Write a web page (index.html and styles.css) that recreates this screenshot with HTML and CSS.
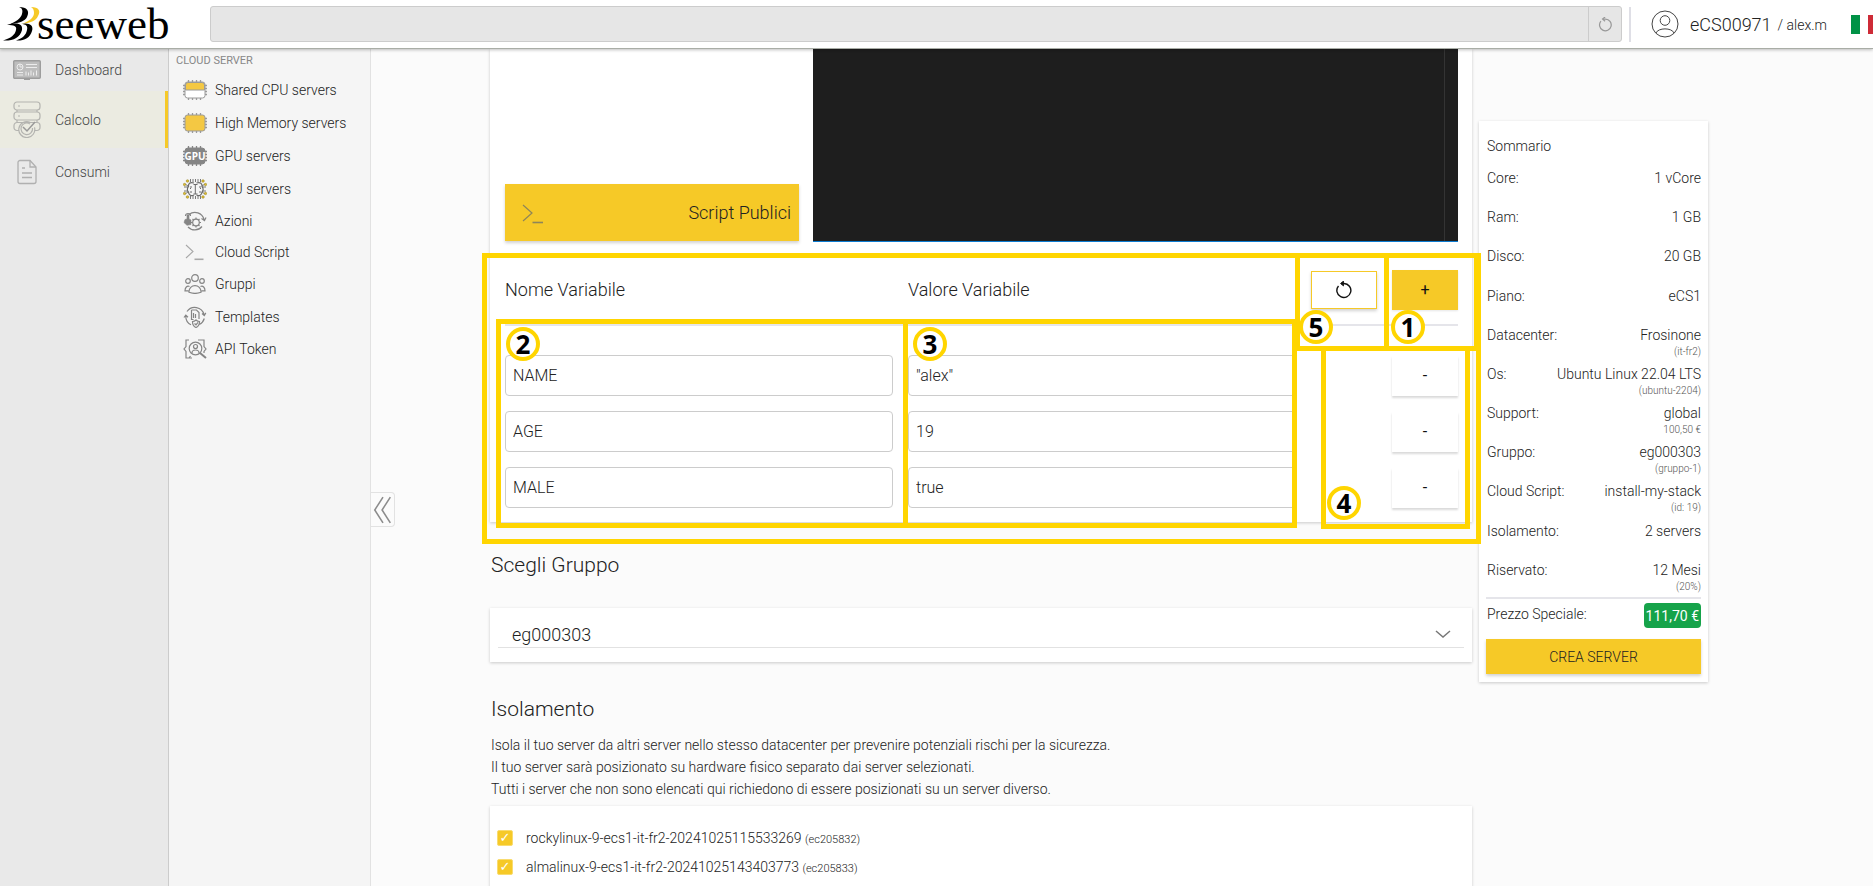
FILE: index.html
```html
<!DOCTYPE html>
<html lang="it">
<head>
<meta charset="utf-8">
<meta name="viewport" content="width=device-width, initial-scale=1">
<title>Seeweb - Cloud Server</title>
<link rel="stylesheet" href="styles.css">
</head>
<body>
<div class="app">
  <header class="topbar">
    <a class="logo" href="#" aria-label="seeweb">
      <svg class="logo-mark" viewBox="0 0 38 34" width="38" height="34" aria-hidden="true">
        <path d="M16 0 C24 0 27 4 24 10 C22 14 16 16 9 17 L5 18 C13 15 18 11 19 7 C20 3 19 1 16 0Z" fill="#000"/>
        <path d="M28 0 C36 0 38 4 35 9 C33 14 27 16 19 17 C27 14 31 10 31 6 C31 3 30 1 28 0Z" fill="#f6c927"/>
        <path d="M4 18 C15 15 20 17 19 23 C17 31 10 34 0 33.500 C8 31 12 28 13 23 C14 19 11 18 4 18Z" fill="#000"/>
        <path d="M18 17 C26 15 31 18 29 24 C27 31 21 34 13 33.500 C20 31 23 28 24 23 C25 19 23 17 18 17Z" fill="#000"/>
      </svg>
      <span class="logo-text">seeweb</span>
    </a>
    <form class="search">
      <input class="search-input" type="search" aria-label="Cerca">
      <button class="search-reset" type="button" aria-label="Ricarica">
        <svg viewBox="0 0 18 18" width="15" height="15" fill="none" stroke="currentColor" stroke-width="1.500"><path d="M3.500 5 A7 7 0 1 0 9 2.500 H6"/><path d="M8.500 0 L5.500 2.500 L8.500 5"/></svg>
      </button>
    </form>
    <div class="account">
      <svg class="avatar" viewBox="0 0 28 28" width="28" height="28" fill="none" stroke="#444" stroke-width="1"><circle cx="14" cy="14" r="13"/><circle cx="14" cy="10.500" r="4.800"/><path d="M5 23 C7 17.500 21 17.500 23 23"/></svg>
      <span class="account-id">eCS00971</span><span class="account-name">/ alex.m</span>
      <span class="flag" role="img" aria-label="Italiano"></span>
    </div>
  </header>

  <nav class="rail" aria-label="Sezioni">
    <a class="rail-item rail-dashboard" href="#">
      <svg viewBox="0 0 28 20" width="28" height="20" fill="none" stroke="#9d9d9d"><rect x=".7" y=".7" width="26.600" height="17.600" rx="1" fill="#bdbdbd" stroke-width="1.400"/><path d="M11 19.300h6" stroke-width="1.500"/><g stroke="#ececec"><circle cx="7" cy="7" r="3"/><path d="M7 4v3h3M13 4.500h11M13 7.500h11M4 12.500h6M4 15h6M13 15.500v-4M15.500 15.500v-3M18 15.500v-5M20.500 15.500v-3M23.500 15.500v-5"/></g></svg>
      <span>Dashboard</span>
    </a>
    <a class="rail-item rail-calcolo active" href="#">
      <svg viewBox="0 0 28 37" width="28" height="37" fill="none" stroke="#b4b4b0" stroke-width="1.200"><rect x="1" y="1" width="26" height="8" rx="3"/><rect x="1" y="11" width="26" height="8" rx="3"/><path d="M6 29.500H4a3 3 0 0 1-3-3v-2a3 3 0 0 1 3-3h20a3 3 0 0 1 3 3v2a3 3 0 0 1-3 3h-2M4 9v2M24 9v2M4 19v2M24 19v2M5 5h2M5 15h2"/><path d="M17 21.200a8 8 0 1 0 4.500 5.200"/><path d="M17 23a5.800 5.800 0 1 0 2.500 4"/><path d="M10 26l4 4 8-9" stroke="#999" stroke-width="1.500"/></svg>
      <span>Calcolo</span>
    </a>
    <a class="rail-item rail-consumi" href="#">
      <svg viewBox="0 0 28 26" width="28" height="26" fill="none" stroke="#b0b0b0" stroke-width="1.300"><path d="M17 1.500H7a2 2 0 0 0-2 2v19a2 2 0 0 0 2 2h14a2 2 0 0 0 2-2V8z"/><path d="M17 1.500V8h6M9 9h3M9 14h10M9 18.500h10"/></svg>
      <span>Consumi</span>
    </a>
  </nav>

  <nav class="subnav" aria-label="Cloud server">
    <h2 class="subnav-title">CLOUD SERVER</h2>
    <a class="subnav-item" href="#">
      <svg viewBox="0 0 24 20" width="24" height="20" fill="none" stroke="#9a9a9a"><path d="M5.500 0v20M9.500 0v20M13.500 0v20M17.500 0v20M0 5.500h24M0 8.500h24M0 11.500h24M0 14.500h24" stroke-width="1.300"/><rect x="2" y="2" width="20" height="16" rx="2.500" fill="#fff"/><path d="M2.500 10V5a2.500 2.500 0 0 1 2.500-2.500h14A2.500 2.500 0 0 1 21.500 5v5z" fill="#f4c843"/></svg>
      <span>Shared CPU servers</span></a>
    <a class="subnav-item" href="#">
      <svg viewBox="0 0 24 20" width="24" height="20" fill="none" stroke="#9a9a9a"><path d="M5.500 0v20M9.500 0v20M13.500 0v20M17.500 0v20M0 5.500h24M0 8.500h24M0 11.500h24M0 14.500h24" stroke-width="1.300"/><rect x="2" y="2" width="20" height="16" rx="2.500" fill="#f4c843"/></svg>
      <span>High Memory servers</span></a>
    <a class="subnav-item" href="#">
      <svg viewBox="0 0 24 20" width="24" height="20" fill="none" stroke="#858585"><path d="M5.500 0v20M9.500 0v20M13.500 0v20M17.500 0v20M0 5.500h24M0 8.500h24M0 11.500h24M0 14.500h24" stroke-width="1.300"/><rect x="2" y="2" width="20" height="16" rx="3" fill="#858585"/><text x="12" y="13.500" class="chip-label">GPU</text></svg>
      <span>GPU servers</span></a>
    <a class="subnav-item" href="#">
      <svg viewBox="0 0 24 20" width="24" height="20" fill="none" stroke="#6b6b6b"><path d="M7.500 0v3M10 0v3M12.500 0v3M15 0v3M17.500 0v3M7.500 17v3M10 17v3M12.500 17v3M15 17v3M17.500 17v3M1 8h4M1 12h4M19 8h4M19 12h4M2 5l3 2M22 5l-3 2M2 15l3-2M22 15l-3-2" stroke-width=".9"/><path d="M11 4C7 2.500 5 5 5.500 7.500C4 9 4 12 5.500 13C5.500 16 8.500 17.500 11 16M13.500 4C17.500 2.500 19.500 5 19 7.500C20.500 9 20.500 12 19 13C19 16 16 17.500 13.500 16" stroke-width="1.200"/><path d="M10.500 5.500h4M12.300 5.500v9.500M10.500 15h4M8 7v2l-1 1M8 14v-2M17 7v2l1 1M17 14v-2"/><g fill="#e3c02a" stroke="#8c7c33" stroke-width=".5"><circle cx="4.500" cy="2" r="1.300"/><circle cx="20" cy="2" r="1.300"/><circle cx="1.500" cy="5.500" r="1.200"/><circle cx="22.500" cy="5.500" r="1.200"/><circle cx="1.500" cy="14.500" r="1.200"/><circle cx="22.500" cy="14.500" r="1.200"/><circle cx="4.500" cy="18" r="1.300"/><circle cx="20" cy="18" r="1.300"/></g></svg>
      <span>NPU servers</span></a>
    <a class="subnav-item row-short" href="#">
      <svg viewBox="0 0 24 20" width="24" height="20" fill="none" stroke="#858585" stroke-width="1.200"><path d="M6 3.500A9.300 9.300 0 0 1 21 8.500M18.500 7.500l3 2l1.500-3M19 15.500A9.300 9.300 0 0 1 5 16"/><circle cx="13" cy="11.500" r="3.300"/><path d="M13 6.500v1.700M13 14.800v1.700M8 11.500h1.700M16.300 11.500H18M9.500 8l1.200 1.200M15.300 13.800l1.200 1.200M9.500 15l1.200-1.200M15.300 9.200L16.500 8"/><path d="M2 8.500l2-.5V4.500a1 1 0 0 1 2 0V8l2 1v4.500l-4 .8-3-2.800z" fill="#858585" stroke-width=".6"/><path d="M2.500 5a2.500 2.500 0 0 1 5 0"/></svg>
      <span>Azioni</span></a>
    <a class="subnav-item row-short" href="#">
      <svg viewBox="0 0 24 20" width="24" height="20" fill="none" stroke="#a8a8a8"><path d="M3 3l7 6.500L3 16" stroke-width="1.100"/><path d="M11.500 17.300h9" stroke-width="1.600"/></svg>
      <span>Cloud Script</span></a>
    <a class="subnav-item" href="#">
      <svg viewBox="0 0 24 20" width="24" height="20" fill="none" stroke="#858585" stroke-width="1.200"><circle cx="12" cy="4" r="3.300"/><circle cx="5" cy="7" r="2.300"/><circle cx="19" cy="7" r="2.300"/><path d="M6 18.300C5.500 9.500 18.500 9.500 18 18.300C14 19.800 10 19.800 6 18.300zM6.500 12.500C4 11.500 2 13.500 2 16.800h3.500M17.500 12.500C20 11.500 22 13.500 22 16.800h-3.500"/></svg>
      <span>Gruppi</span></a>
    <a class="subnav-item" href="#">
      <svg viewBox="0 0 24 22" width="24" height="22" fill="none" stroke="#858585" stroke-width="1.200"><path d="M4 5.500A9.500 9.500 0 0 1 21 8.500M19 7.500l2.300 2l1.500-2.600M8 18.800A9.500 9.500 0 0 1 2.800 10M1 11.500l1.800-2.300l2.200 2M21.300 12.500a9.500 9.500 0 0 1-5 6"/><path d="M8.500 4h5l2.500 2.500V13M8.500 4v9.500h2M10.500 7v5M12.500 8v4"/><path d="M9.500 15.500c2 0 3-1 3.500-1.500c1 1 2 1.500 3.500 1.500c0 3.500-1 5-3.500 6c-2.500-1-3.500-2.500-3.500-6zM11.500 17.500l1.500 1.300l2-2.500"/></svg>
      <span>Templates</span></a>
    <a class="subnav-item row-short" href="#">
      <svg viewBox="0 0 24 20" width="24" height="20" fill="none" stroke="#858585" stroke-width="1.200"><path d="M6 1H3v6.500L1 10l2 2.500V19h3M9 19H6l1.500-2M15 1h6v6.500l2 2.500l-2 2.500V14"/><circle cx="12.500" cy="9.500" r="6.300"/><circle cx="12.500" cy="7.500" r="2"/><path d="M9 14c0-4 7-4 7 0"/><path d="M17 14l6 5" stroke-width="2"/></svg>
      <span>API Token</span></a>
  </nav>

  <main class="main">
    <button class="collapse" type="button" aria-label="Comprimi menu">
      <svg viewBox="0 0 24 34" width="22" height="32" fill="none" stroke="#8c8c8c" stroke-width="1.700"><path d="M12 3L3 17l9 14M20 3l-9 14l9 14"/></svg>
    </button>
    <div class="content">
      <section class="card script-card">
        <div class="script-row">
          <div class="script-side">
            <button class="btn-script" type="button">
              <svg viewBox="0 0 24 22" width="24" height="22" fill="none" stroke="#8e8559" stroke-width="1.200"><path d="M3 3l9 8l-9 8"/><path d="M12.500 20.500H23" stroke-width="1.600"/></svg>
              <span>Script Publici</span>
            </button>
          </div>
          <div class="editor" role="textbox" aria-label="Editor script"></div>
        </div>
        <div class="vars">
          <div class="vars-grid vars-head">
            <span>Nome Variabile</span>
            <span>Valore Variabile</span>
            <button class="btn-reset" type="button" aria-label="Ripristina">
              <svg viewBox="0 0 18 18" width="18" height="18" fill="none" stroke="#111" stroke-width="1.400"><path d="M3.500 5 A7 7 0 1 0 9 2.500 H6"/><path d="M8.500 0 L5.500 2.500 L8.500 5z" fill="#111" stroke-width=".8"/></svg>
            </button>
            <button class="btn-add" type="button">+</button>
          </div>
          <div class="vars-body">
            <div class="vars-grid">
              <input class="field" type="text" value="NAME" aria-label="Nome variabile 1">
              <input class="field" type="text" value="&quot;alex&quot;" aria-label="Valore variabile 1">
              <button class="btn-remove" type="button">-</button>
            </div>
            <div class="vars-grid">
              <input class="field" type="text" value="AGE" aria-label="Nome variabile 2">
              <input class="field" type="text" value="19" aria-label="Valore variabile 2">
              <button class="btn-remove" type="button">-</button>
            </div>
            <div class="vars-grid">
              <input class="field" type="text" value="MALE" aria-label="Nome variabile 3">
              <input class="field" type="text" value="true" aria-label="Valore variabile 3">
              <button class="btn-remove" type="button">-</button>
            </div>
          </div>
          <div class="mark mark-all"></div>
          <div class="mark mark-names"><span class="num">2</span></div>
          <div class="mark mark-values"><span class="num">3</span></div>
          <div class="mark mark-remove"><span class="num">4</span></div>
          <div class="mark mark-reset"><span class="num">5</span></div>
          <div class="mark mark-add"><span class="num">1</span></div>
        </div>
      </section>

      <h2 class="heading"><label for="group">Scegli Gruppo</label></h2>
      <section class="card group-card">
        <select class="group-select" id="group"><option>eg000303</option></select>
        <svg class="chevron" viewBox="0 0 16 9" width="16" height="9" fill="none" stroke="#777" stroke-width="1.500"><path d="M1 1l7 6l7-6"/></svg>
      </section>

      <h2 class="heading">Isolamento</h2>
      <p class="lead">Isola il tuo server da altri server nello stesso datacenter per prevenire potenziali rischi per la sicurezza.<br>Il tuo server sarà posizionato su hardware fisico separato dai server selezionati.<br>Tutti i server che non sono elencati qui richiedono di essere posizionati su un server diverso.</p>
      <section class="card servers-card">
        <label class="server"><input class="check" type="checkbox" checked><span>rockylinux-9-ecs1-it-fr2-20241025115533269 <small>(ec205832)</small></span></label>
        <label class="server"><input class="check" type="checkbox" checked><span>almalinux-9-ecs1-it-fr2-20241025143403773 <small>(ec205833)</small></span></label>
      </section>
    </div>

    <aside class="card summary">
      <h3 class="summary-title">Sommario</h3>
      <dl class="summary-list">
        <div><dt>Core:</dt><dd>1 vCore</dd></div>
        <div><dt>Ram:</dt><dd>1 GB</dd></div>
        <div><dt>Disco:</dt><dd>20 GB</dd></div>
        <div><dt>Piano:</dt><dd>eCS1</dd></div>
        <div><dt>Datacenter:</dt><dd>Frosinone<small>(it-fr2)</small></dd></div>
        <div><dt>Os:</dt><dd>Ubuntu Linux 22.04 LTS<small>(ubuntu-2204)</small></dd></div>
        <div><dt>Support:</dt><dd>global<small>100,50 €</small></dd></div>
        <div><dt>Gruppo:</dt><dd>eg000303<small>(gruppo-1)</small></dd></div>
        <div><dt>Cloud Script:</dt><dd>install-my-stack<small>(id: 19)</small></dd></div>
        <div><dt>Isolamento:</dt><dd>2 servers</dd></div>
        <div><dt>Riservato:</dt><dd>12 Mesi<small>(20%)</small></dd></div>
      </dl>
      <div class="price"><span>Prezzo Speciale:</span><strong class="price-tag">111,70 €</strong></div>
      <button class="btn-create" type="button">CREA SERVER</button>
    </aside>
  </main>
</div>
</body>
</html>
```
FILE: styles.css
```css
* { box-sizing: border-box; }

:root {
  --yellow: #f6c927;
  --mark: #ffd500;
  --line: #e5e5ea;
  --shadow: 0 2px 3px rgba(0, 0, 0, .18);
}

body {
  margin: 0;
  font-family: Roboto, sans-serif;
  font-weight: 300;
  font-size: 14px;
  color: #222;
  background: #fbfbfb;
  overflow: hidden;
}

a { color: inherit; text-decoration: none; }
button, input, select { font: inherit; color: inherit; margin: 0; }
button { border: 0; padding: 0; cursor: pointer; }
h2, h3, p, dl, dd { margin: 0; font-weight: 300; }
svg { display: block; flex: none; }

.app {
  display: grid;
  grid-template: 49px 1fr / 169px 202px minmax(0, 1fr);
  height: 100vh;
}

/* top bar */
.topbar {
  grid-column: 1 / -1;
  display: flex;
  align-items: center;
  background: #fff;
  border-bottom: 1px solid #a9ada6;
  box-shadow: 0 1px 3px rgba(0, 0, 0, .25);
  z-index: 2;
  overflow: hidden;
}
.logo { display: flex; width: 210px; height: 48px; padding-left: 3px; align-items: center; }
.logo-text {
  margin-left: -4px;
  font: 45px/40px "Liberation Serif", serif;
  color: #000;
}
.search {
  flex: 1;
  display: flex;
  height: 36px;
  background: #e6e6e6;
  border: 1px solid #ccc;
  border-radius: 3px;
}
.search-input { flex: 1; border: 0; background: none; outline: 0; }
.search-reset {
  display: grid;
  place-items: center;
  width: 33px;
  background: none;
  border-left: 1px solid #ccc;
  color: #999;
}
.account {
  display: flex;
  align-items: center;
  width: 251px;
}
.account::before {
  content: "";
  width: 2px;
  height: 35px;
  margin: 0 20px 0 7px;
  background: #dfdfe6;
}
.account-id { margin-left: 11px; font-size: 18px; white-space: nowrap; }
.account-name { margin: 2px 0 0 6px; white-space: nowrap; }
.flag {
  flex: none;
  width: 26px;
  height: 19px;
  margin: 0 -4px 0 auto;
  background: linear-gradient(90deg, #009246 33%, #fff 33% 66%, #ce2b37 66%);
}

/* primary navigation */
.rail { background: #e9e9e9; border-right: 1px solid #ccc; color: #444; }
.rail-item { display: flex; align-items: center; gap: 14px; padding-left: 13px; height: 42px; }
.rail-calcolo { height: 57px; background: #ebebe1; border-right: 3px solid var(--yellow); }
.rail-consumi { height: 48px; }

/* secondary navigation */
.subnav { padding: 3px 0 0 14px; background: #f5f5f5; border-right: 1px solid #e2e2e2; }
.subnav-title { margin-left: -7px; font-size: 11px; font-weight: 400; line-height: 18px; color: #888; }
.subnav-item { display: flex; align-items: center; gap: 8px; height: 33px; white-space: nowrap; }
.subnav-title + .subnav-item { margin-top: 3px; }
.subnav-item.row-short { height: 31px; }
.chip-label { font: 700 10px "Open Sans", sans-serif; fill: #fff; stroke: none; text-anchor: middle; }

/* page body */
.main {
  position: relative;
  display: flex;
  align-items: flex-start;
  gap: 7px;
  min-height: 0;
  padding: 0 165px 0 119px;
  overflow: hidden;
}
.content { flex: 1; min-width: 0; }
.collapse {
  position: absolute;
  left: 0;
  top: 443px;
  display: grid;
  place-items: center;
  width: 24px;
  height: 35px;
  background: #fbfbfb;
  border: 1px solid #e2e2e2;
  border-left: 0;
  border-radius: 0 4px 4px 0;
}
.card { background: #fff; box-shadow: 0 1px 3px rgba(0, 0, 0, .2); }

.script-row { display: flex; gap: 14px; padding: 0 14px 0 15px; height: 193px; }
.script-side { flex: 294; display: flex; align-items: flex-end; }
.btn-script {
  display: flex;
  flex: 1;
  align-items: center;
  justify-content: space-between;
  height: 57px;
  margin-bottom: 1px;
  padding: 0 8px 0 15px;
  background: var(--yellow);
  box-shadow: var(--shadow);
  font-size: 18px;
}
.editor {
  flex: 645;
  display: flex;
  justify-content: flex-end;
  background: #1e1e1e;
  border-bottom: 1px solid #0c7bd0;
}
.editor::after { content: ""; width: 13px; border-left: 1px solid #343434; }

.vars { position: relative; padding: 28px 14px 14px 15px; }
.vars-grid { display: grid; grid-template-columns: 1fr 1fr 66px 66px; column-gap: 15px; align-items: center; }
.vars-head { padding-bottom: 14px; border-bottom: 2px solid var(--line); font-size: 18px; line-height: 20px; }
.vars-body { display: grid; gap: 15px; padding-top: 29px; }
.field {
  min-width: 0;
  height: 41px;
  padding: 0 7px;
  background: #fff;
  border: 1px solid #ccc;
  border-radius: 4px;
  font-size: 16px;
}
.btn-reset, .btn-add, .btn-remove { height: 40px; font-size: 16px; font-weight: 400; color: #111; }
.btn-reset { display: grid; place-items: center; height: 38px; background: #fff; border: 1px solid var(--yellow); box-shadow: var(--shadow); }
.btn-add { background: var(--yellow); box-shadow: 0 1px 2px rgba(0, 0, 0, .1); }
.btn-remove { grid-column: 4; background: #fff; box-shadow: 0 2px 2px rgba(0, 0, 0, .15); }

/* numbered callouts laid over the variables form */
.mark { position: absolute; border: 5px solid var(--mark); pointer-events: none; }
.mark-all { left: -8px; right: -9px; top: 11px; bottom: -22px; }
.mark-names { left: 6px; width: calc(50% - 79px); top: 77px; bottom: -6px; }
.mark-values { left: calc(50% - 78px); right: 175px; top: 77px; bottom: -6px; }
.mark-remove { right: 2px; width: 149px; top: 104px; bottom: -7px; }
.mark-reset { right: 83px; width: 94px; top: 11px; height: 98px; }
.mark-add { right: -9px; width: 97px; top: 11px; height: 98px; border-right-width: 7px; }
.num {
  position: absolute;
  display: grid;
  place-items: center;
  width: 34px;
  height: 34px;
  border: 4px solid var(--mark);
  border-radius: 50%;
  background: #fff;
  color: #000;
  font: 700 26px/26px "Noto Sans", sans-serif;
}
.mark-names .num, .mark-values .num { left: 5px; top: 3px; }
.mark-remove .num { left: 1px; bottom: 4px; }
.mark-reset .num { left: -1px; bottom: 2px; }
.mark-add .num { left: 2px; bottom: 2px; }

.heading { font-size: 21px; line-height: 30px; padding-left: 1px; }
.script-card + .heading { margin: 28px 0; }
.group-card { position: relative; padding: 14px 8px; margin-bottom: 32px; }
.group-select {
  display: block;
  appearance: none;
  width: 100%;
  height: 26px;
  padding: 0 14px;
  border: 0;
  border-bottom: 1px solid #e2e2e2;
  background: none;
  font-size: 18px;
}
.chevron { position: absolute; right: 21px; top: 22px; pointer-events: none; }
.lead { margin: 10px 0 6px 1px; line-height: 22px; }
.servers-card { display: grid; gap: 5px; padding: 20px 7px; }
.server { display: flex; align-items: center; gap: 13px; height: 24px; }
.check {
  appearance: none;
  display: grid;
  place-items: center;
  width: 16px;
  height: 16px;
  margin: 0;
  border: 1px solid #f9dc70;
  border-radius: 2px;
  background: var(--yellow);
}
.check:checked::after { content: "✓"; font: 700 13px/14px "DejaVu Sans", sans-serif; color: #fff; }
small { font-size: 11px; }

/* order summary */
.summary { flex: none; width: 229px; margin-top: 72px; padding: 12px 7px 8px; }
.summary-title { padding-left: 1px; font-size: 14px; line-height: 26px; }
.summary-list { display: grid; grid-template-rows: repeat(11, 1fr); min-height: 431px; margin-top: 7px; }
.summary-list > div { display: flex; justify-content: space-between; padding-left: 1px; line-height: 24px; }
.summary dd { text-align: right; }
.summary small { display: block; font-size: 10px; line-height: 10px; color: #555; }
.price {
  display: flex;
  justify-content: space-between;
  padding: 3px 0 0 1px;
  border-top: 2px solid var(--line);
  line-height: 24px;
}
.price-tag {
  height: 25px;
  margin-top: 1px;
  padding: 0 2px;
  border-radius: 4px;
  background: #16a34a;
  color: #fff;
  font-weight: 400;
  line-height: 26px;
}
.btn-create {
  width: 100%;
  height: 35px;
  margin-top: 11px;
  background: var(--yellow);
  box-shadow: var(--shadow);
}
```
